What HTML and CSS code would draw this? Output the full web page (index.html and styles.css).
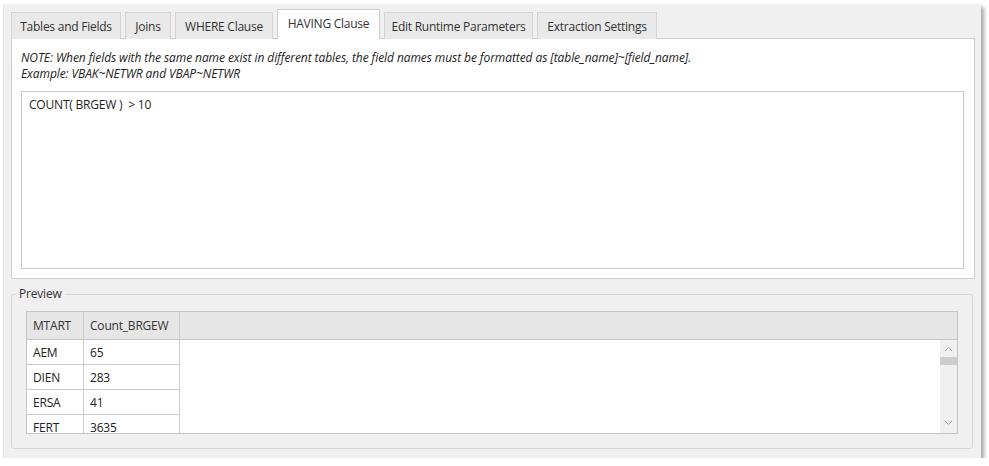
FILE: index.html
```html
<!DOCTYPE html>
<html>
<head>
<meta charset="utf-8">
<link rel="stylesheet" href="styles.css">
</head>
<body>
<div class="window">
  <div class="tabs">
    <div class="tab t1">Tables and Fields</div>
    <div class="tab t2">Joins</div>
    <div class="tab t3">WHERE Clause</div>
    <div class="tab active t4">HAVING Clause</div>
    <div class="tab t5">Edit Runtime Parameters</div>
    <div class="tab t6">Extraction Settings</div>
  </div>
  <div class="panel">
    <div class="note">NOTE: When fields with the same name exist in different tables, the field names must be formatted as [table_name]~[field_name].<br>Example: VBAK~NETWR and VBAP~NETWR</div>
    <div class="editor">COUNT( BRGEW )&nbsp;&nbsp;&gt; 10</div>
  </div>
  <div class="group">
    <div class="legend">Preview</div>
    <div class="grid">
      <div class="gridmain">
        <div class="row head">
          <div class="c c1">MTART</div>
          <div class="c c2">Count_BRGEW</div>
          <div class="c filler"></div>
        </div>
        <div class="body">
          <div class="cols">
            <div class="row"><div class="c c1">AEM</div><div class="c c2">65</div></div>
            <div class="row"><div class="c c1">DIEN</div><div class="c c2">283</div></div>
            <div class="row"><div class="c c1">ERSA</div><div class="c c2">41</div></div>
            <div class="row"><div class="c c1">FERT</div><div class="c c2">3635</div></div>
          </div>
          <div class="scroll">
            <svg class="arr" width="9" height="6" viewBox="0 0 9 6"><path d="M1 5 L4.5 1.5 L8 5" fill="none" stroke="#a6a6a6" stroke-width="1"/></svg>
            <div class="thumb"></div>
            <div class="track"></div>
            <svg class="arr" width="9" height="6" viewBox="0 0 9 6"><path d="M1 1 L4.5 4.5 L8 1" fill="none" stroke="#a6a6a6" stroke-width="1"/></svg>
          </div>
        </div>
      </div>
    </div>
  </div>
</div>
</body>
</html>
```
FILE: styles.css
```css
* { box-sizing: border-box; }
html, body { margin: 0; padding: 0; background: #ffffff; }
body {
  font-family: "Open Sans", "Noto Sans", sans-serif;
  font-size: 12px;
  color: #222;
}
.window {
  margin: 4px 0 0 3px;
  width: 978px;
  height: 454px;
  background: #f0f0f0;
  border-left: 1px solid #e3e3e3;
  border-top: 1px solid #f4f4f4;
  box-shadow: 3px 3px 4px rgba(0,0,0,0.35);
  padding: 4px 0 0 7px;
}
.tabs {
  display: flex;
  align-items: flex-end;
  gap: 4px;
  height: 30px;
  margin-bottom: -1px;
  position: relative;
  z-index: 1;
}
.tab {
  height: 27px;
  border: 1px solid #d4d4d4;
  border-bottom: none;
  background: #e9e9e9;
  color: #333;
  font-size: 12px;
  letter-spacing: -0.25px;
  display: flex;
  align-items: center;
  justify-content: center;
  white-space: nowrap;
}
.tab.active {
  height: 30px;
  background: #fff;
  border-color: #cfcfcf;
  padding-bottom: 2px;
}
.t1 { width: 110px; }
.t2 { width: 46px; }
.t3 { width: 98px; }
.t4 { width: 103px; }
.t5 { width: 149px; }
.t6 { width: 120px; }
.panel {
  width: 964px;
  height: 241px;
  background: #fff;
  border: 1px solid #cfcfcf;
  padding: 11px 9px 9px 9px;
  display: flex;
  flex-direction: column;
}
.note {
  font-style: italic;
  font-size: 12px;
  letter-spacing: -0.08px;
  line-height: 16px;
  color: #222;
  height: 41px;
  white-space: nowrap;
}
.editor {
  width: 943px;
  height: 178px;
  border: 1px solid #c8c8c8;
  padding: 5px 7px;
  font-size: 12px;
  letter-spacing: -0.2px;
  line-height: 16px;
  color: #1e1e1e;
}
.group {
  position: relative;
  width: 962px;
  height: 155px;
  margin-top: 15px;
  border: 1px solid #d6d6d6;
  border-radius: 3px;
  padding: 16px 14px 0 14px;
}
.legend {
  position: absolute;
  top: -9px;
  left: 4px;
  padding: 0 3px;
  background: #f0f0f0;
  font-size: 12px;
  letter-spacing: -0.2px;
  line-height: 16px;
  color: #333;
}
.grid {
  width: 932px;
  height: 123px;
  border: 1px solid #c4c4c4;
  background: #fff;
  overflow: hidden;
}
.gridmain { display: flex; flex-direction: column; height: 100%; }
.row { display: flex; }
.c {
  height: 25px;
  padding-left: 6px;
  display: flex;
  align-items: center;
  font-size: 12px;
  letter-spacing: -0.2px;
  color: #222;
  border-right: 1px solid #cbcbcb;
  border-bottom: 1px solid #cbcbcb;
  white-space: nowrap;
}
.c1 { width: 57px; }
.c2 { width: 96px; }
.head .c {
  height: 28px;
  background: #e6e6e6;
  color: #333;
  border-bottom: 1px solid #c4c4c4;
}
.head .filler { flex: 1; border-right: none; }
.body { display: flex; flex: 1; min-height: 0; }
.cols { flex: 1; overflow: hidden; }
.scroll {
  width: 17px;
  background: #f0f0f0;
  display: flex;
  flex-direction: column;
  align-items: center;
  padding-top: 6px;
}
.arr { display: block; }
.thumb {
  width: 17px;
  height: 8px;
  background: #cdcdcd;
  margin-top: 5px;
}
.track { flex: 1; }
.scroll .arr:last-child { margin-bottom: 7px; }
```
